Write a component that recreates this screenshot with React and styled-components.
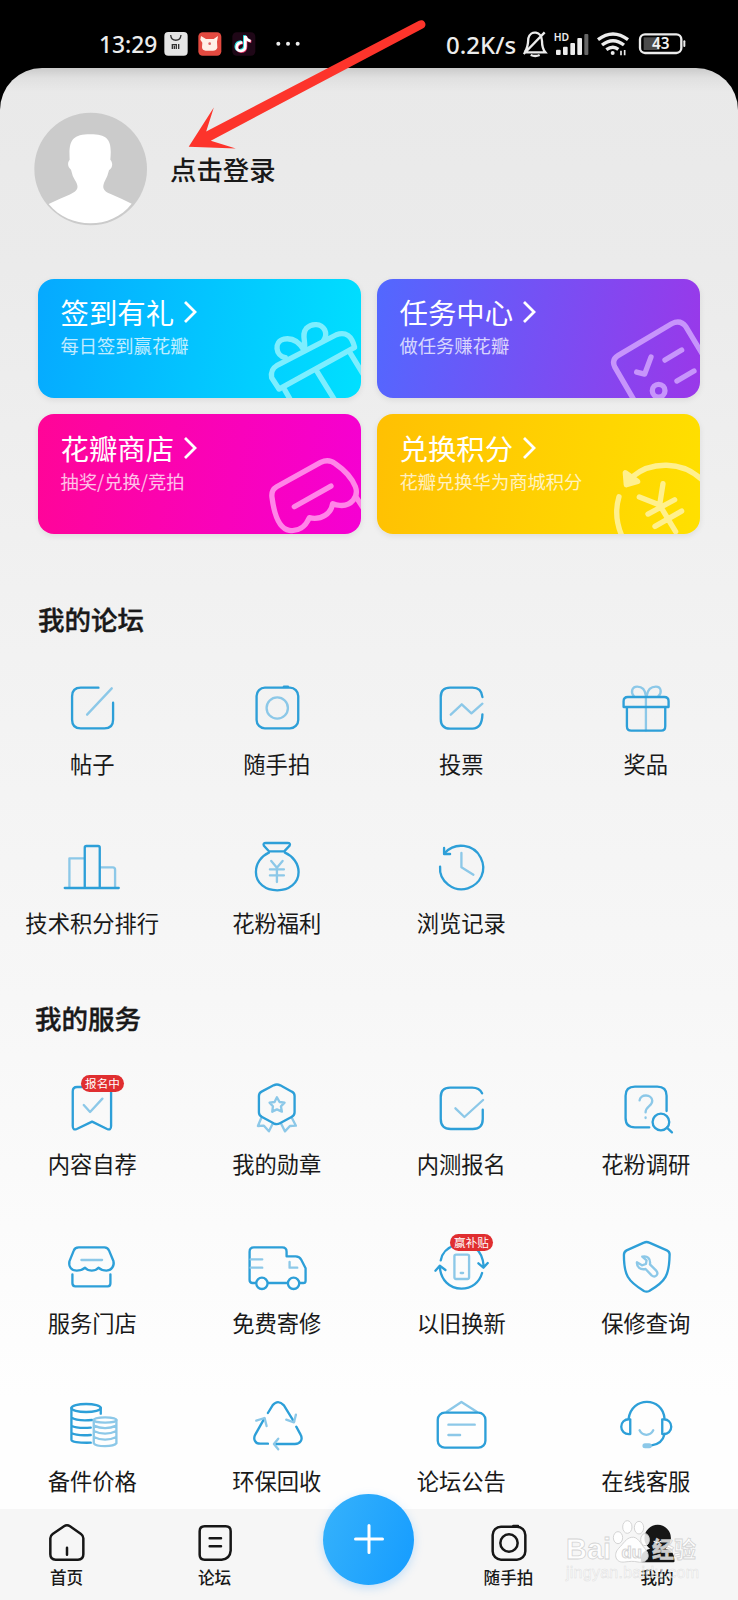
import React from "react";
import styled, { createGlobalStyle, css } from "styled-components";

const GlobalStyle = createGlobalStyle`
  * { box-sizing: border-box; }
  body {
    margin: 0;
    background: #000;
    font-family: "Noto Sans CJK SC", "Noto Sans", sans-serif;
    color: #191919;
  }
`;

const Screen = styled.div`
  position: relative;
  width: 738px;
  height: 1600px;
  overflow: hidden;
  display: flex;
  flex-direction: column;
  background: #000;
`;

/* ---------- status bar ---------- */

const StatusBar = styled.header`
  height: 68px;
  flex: none;
  display: flex;
  justify-content: space-between;
  padding: 20px 52px 0 99px;
  color: #ececec;
`;

const StatusGroup = styled.div`
  display: flex;
  align-items: center;
  height: 48px;
`;

const StatusText = styled.span`
  width: ${(p) => p.$w}px;
  font: 500 ${(p) => p.$size || 22.5}px/48px "Noto Sans", sans-serif;
  padding-top: 1px;
  white-space: nowrap;
`;

const StatusIcon = styled.svg`
  flex: none;
  height: 48px;
  width: ${(p) => p.$w}px;
  margin-left: ${(p) => p.$gap || 0}px;
  overflow: visible;
`;

/* ---------- main sheet ---------- */

const Sheet = styled.main`
  flex: 1;
  min-height: 0;
  display: flex;
  flex-direction: column;
  border-radius: 42px 42px 0 0;
  background:
    linear-gradient(rgba(0, 0, 0, 0.13), rgba(0, 0, 0, 0.04) 10px, rgba(0, 0, 0, 0) 24px),
    linear-gradient(#e9e9e9 0, #ebebeb 200px, #f1f1f1 520px, #f7f7f7 930px, #fefefe 1330px);
`;

const Profile = styled.section`
  display: flex;
  align-items: center;
  gap: 22px;
  height: 114px;
  margin: 44px 0 0 34px;
`;

const LoginText = styled.span`
  font-size: 26.4px;
  font-weight: 500;
  line-height: 40px;
`;

const CardGrid = styled.section`
  display: grid;
  grid-template-columns: 323px 323px;
  grid-auto-rows: 119.5px;
  gap: 16px;
  margin: 52.5px 0 0 38px;
`;

const Card = styled.article`
  position: relative;
  overflow: hidden;
  border-radius: 16px;
  padding: 13.5px 0 0 22.5px;
  color: #fff;
  background: linear-gradient(100deg, ${(p) => p.$from}, ${(p) => p.$to});
  box-shadow: 0 2px 6px rgba(0, 0, 0, 0.08);
`;

const CardTitle = styled.div`
  display: flex;
  align-items: center;
  gap: 9px;
  height: 40px;
  font-size: 28.4px;
  line-height: 40px;
`;

const CardSub = styled.div`
  font-size: 18.3px;
  line-height: 26px;
  opacity: 0.75;
`;

const CardArt = styled.svg`
  position: absolute;
  right: 0;
  top: 0;
  width: 94.3px;
  height: 119.5px;
  fill: none;
  stroke: ${(p) => p.$ink};
  stroke-width: 16;
  stroke-linecap: round;
  stroke-linejoin: round;
`;

const SectionTitle = styled.h2`
  margin: ${(p) => p.$top}px 0 0 ${(p) => p.$left}px;
  height: 40px;
  font-size: 26.5px;
  font-weight: 500;
  line-height: 40px;
  -webkit-text-stroke: 0.4px #191919;
`;

const TileGrid = styled.section`
  display: grid;
  grid-template-columns: repeat(4, 1fr);
  grid-auto-rows: 158.6px;
  margin-top: 37.5px;
`;

const Tile = styled.div`
  position: relative;
  display: flex;
  flex-direction: column;
  align-items: center;
`;

const TileIcon = styled.svg`
  width: 80px;
  height: 64px;
  fill: none;
  stroke: #2d9fd8;
  stroke-width: 7;
  stroke-linecap: round;
  stroke-linejoin: round;
  overflow: visible;
  .soft { stroke: #8cc8e8; }
`;

const TileLabel = styled.span`
  margin-top: 7.2px;
  font-size: 22.3px;
  line-height: 32px;
  white-space: nowrap;
`;

const Badge = styled.span`
  position: absolute;
  left: 81px;
  top: -0.5px;
  width: 43px;
  height: 17px;
  border-radius: 9px;
  background: #e02e30;
  color: #fff;
  font-size: 11.6px;
  line-height: 16.5px;
  text-align: center;
`;

/* ---------- bottom navigation ---------- */

const NavBar = styled.nav`
  position: absolute;
  left: 0;
  bottom: 0;
  width: 738px;
  height: 91px;
  display: grid;
  grid-template-columns: 133px 163px 145px 135px 162px;
  background: #f6f6f6;
`;

const NavItem = styled.div`
  display: flex;
  flex-direction: column;
  align-items: center;
  padding-top: 11px;
`;

const NavIcon = styled.svg`
  width: 44px;
  height: 46px;
  fill: none;
  stroke: #161616;
  stroke-width: 7.5;
  stroke-linecap: round;
  stroke-linejoin: round;
`;

const NavLabel = styled.span`
  margin-top: -1.5px;
  font-size: 16.6px;
  font-weight: 500;
  line-height: 24px;
`;

const AddButton = styled.button`
  justify-self: center;
  margin-top: -15.5px;
  width: 91px;
  height: 91px;
  padding: 0;
  border: 0;
  border-radius: 50%;
  background: linear-gradient(110deg, #36b2fb, #159cff);
  box-shadow: 0 3px 10px rgba(40, 150, 255, 0.25);
  display: flex;
  align-items: center;
  justify-content: center;
`;

/* ---------- overlays ---------- */

const Arrow = styled.svg`
  position: absolute;
  left: 180px;
  top: 10px;
  width: 260px;
  height: 150px;
  fill: #fd342b;
`;

const Watermark = styled.div`
  position: absolute;
  left: 566px;
  top: 1518px;
  width: 136px;
  height: 68px;
  display: flex;
  flex-direction: column;
  pointer-events: none;
`;

const markInk = css`
  color: rgba(255, 255, 255, 0.8);
  -webkit-text-stroke: 0.8px rgba(205, 205, 205, 0.85);
  font-family: "Liberation Sans", "Noto Sans CJK SC", sans-serif;
`;

const MarkTop = styled.div`
  ${markInk}
  display: flex;
  align-items: flex-end;
  height: 46px;
  font-weight: 700;
`;

const MarkWord = styled.span`
  font-size: ${(p) => p.$size}px;
  width: ${(p) => p.$w}px;
  white-space: nowrap;
  line-height: ${(p) => p.$lh}px;
`;

const MarkPaw = styled.svg`
  width: 40px;
  height: 46px;
  fill: rgba(255, 255, 255, 0.85);
  stroke: #d4d4d4;
  stroke-width: 3;
`;

const MarkUrl = styled.div`
  ${markInk}
  color: rgba(255, 255, 255, 0.6);
  -webkit-text-stroke: 0.5px rgba(212, 212, 212, 0.7);
  font-size: 16px;
  line-height: 18px;
  letter-spacing: 0.25px;
  white-space: nowrap;
`;

/* ---------- data ---------- */

const cards = [
  {
    title: "签到有礼", sub: "每日签到赢花瓣", from: "#06a9ff", to: "#00e0ff", ink: "#7deeff",
    box: "740 56 283 358",
    art: (
      <>
        <path d="M754 352q-4-25 15-36L948 223q42-15 55 38L776 386Z" />
        <path d="M795 292c-30-5-35-50-4-56 28-5 48 12 61 34 6-25-10-48 6-66 16-17 45-15 55 4 6 12 5 20-3 32" />
        <path d="M794 390l22 38M888 330l62 100M990 278l50 82" />
      </>
    ),
  },
  {
    title: "任务中心", sub: "做任务赚花瓣", from: "#5268ff", to: "#9a38e9", ink: "#c795fb",
    box: "737 56 283 358",
    art: (
      <>
        <path d="M824 424l-60-103q-12-23 10-36l160-95q26-14 43 9l60 100" />
        <path d="M829 335l24 6 19-51M914 299l50-30M950 362l51-30" />
        <circle cx="895" cy="391" r="19" />
      </>
    ),
  },
  {
    title: "花瓣商店", sub: "抽奖/兑换/竞拍", from: "#ff0597", to: "#f500d3", ink: "#ff85e8",
    box: "740 462 283 358",
    art: (
      <>
        <path d="M755 712q-3-22 14-32l132-73q24-12 44 4 44 30 60 68c12 32-14 60-46 57q-12 0-22-5c-4 28-32 50-70 42-12 28-34 42-60 38-34-6-46-52-52-99Z" />
        <path d="M822 740l110-62M1008 712l22 34" />
      </>
    ),
  },
  {
    title: "兑换积分", sub: "花瓣兑换华为商城积分", from: "#ffc003", to: "#ffe000", ink: "#fff08e",
    box: "737 462 283 358",
    art: (
      <>
        <path d="M816 650c55-46 150-50 212 12M776 710q-17 57 8 116" />
        <path d="M795 638l3 36 34-10Z" fill="#fff08e" />
        <path d="M908 671l-10 64M837 711l61 24M863 762l80-43M884 799l80-46M898 735l48 80" />
      </>
    ),
  },
];

const forumTiles = [
  {
    label: "帖子", box: "156.75 258 240 192",
    icon: (
      <>
        <path d="M296 293h-53q-26 0-26 26v70q0 26 26 26h71q26 0 26-26v-51" />
        <path className="soft" d="M336 295l-74 79" />
      </>
    ),
  },
  {
    label: "随手拍", box: "710.25 258 240 192",
    icon: (
      <>
        <rect x="769" y="293" width="125" height="122" rx="25" />
        <path d="M851 290h12" />
        <circle className="soft" cx="831" cy="354" r="32" />
      </>
    ),
  },
  {
    label: "投票", box: "153.75 48 240 192",
    icon: (
      <>
        <path d="M338 111c-2-20-12-28-30-28h-67q-28 0-28 28v66q0 29 28 29h67q29 0 30-43" />
        <path className="soft" d="M243 164l33-31 29 27 33-29" />
      </>
    ),
  },
  {
    label: "奖品", box: "707.25 48 240 192",
    icon: (
      <>
        <path className="soft" d="M827 109v102M827 108c-2-18-12-28-26-28-17 0-20 18-10 29M829 108c3-18 13-28 28-28 16 0 19 18 7 29" />
        <path d="M760 141v-17q0-13 13-13h109q13 0 13 13v17ZM770 143v56q0 13 13 13h90q12 0 12-13v-56" />
      </>
    ),
  },
  {
    label: "技术积分排行", box: "156.75 734 240 192",
    icon: (
      <>
        <path className="soft" d="M209 889v-85h43M303 831h36q7 0 7 7v51" />
        <path d="M255 892V772q0-5 5-5h35q5 0 5 5v120M195 893h162" />
      </>
    ),
  },
  {
    label: "花粉福利", box: "710.25 734 240 192",
    icon: (
      <>
        <path d="M806 783l-15-17q-4-8 6-8h65q10 0 6 8l-16 17ZM806 787c-23 10-39 33-39 58 0 34 29 55 64 55s64-21 64-55c0-25-17-48-41-58" />
        <path className="soft" d="M813 812l17 20 17-20M830 832v43M809 837h42M809 855h42" />
      </>
    ),
  },
  {
    label: "浏览记录", box: "153.75 524 240 192",
    icon: (
      <>
        <path d="M225 578c31-34 87-27 108 14 19 38 0 79-39 92-42 13-87-21-83-65" />
        <path d="M223 563v18h18" />
        <path className="soft" d="M275 578v43l36 22" />
      </>
    ),
  },
];

const serviceTiles = [
  {
    label: "内容自荐", badge: "报名中", box: "156.75 258 240 192",
    icon: (
      <>
        <path d="M219 408V304q0-13 13-13h90q12 0 12 13v104q0 14-12 9l-45-22-46 22q-12 5-12-9Z" />
        <path className="soft" d="M252 345l19 21 37-40" />
      </>
    ),
  },
  {
    label: "我的勋章", box: "710.25 258 240 192",
    icon: (
      <>
        <path className="soft" d="M783 384l-10 24 18-1 15 17 12-24M875 384l12 23-18 1-15 16-12-24M830 322l8 14 15 2-11 11 3 16-15-7-14 7 2-16-10-11 15-2Z" />
        <path d="M820 286q10-5 20 0l35 19q8 4 8 13v49q0 9-8 13l-36 20q-9 5-19 0l-36-20q-8-4-8-13v-49q0-9 8-13Z" />
      </>
    ),
  },
  {
    label: "内测报名", box: "153.75 48 240 192",
    icon: (
      <>
        <path d="M337 100q-8-17-30-17h-66q-28 0-28 28v66q0 30 30 30h66q30 0 30-30v-28" />
        <path className="soft" d="M257 145l27 26 56-51" />
      </>
    ),
  },
  {
    label: "花粉调研", box: "707.25 48 240 192",
    icon: (
      <>
        <path d="M837 202h-43q-28 0-28-28v-67q0-27 28-27h67q28 0 28 27v46" />
        <circle cx="872" cy="186" r="25" />
        <path d="M890 203l15 14" />
        <path className="soft" d="M808 121c2-20 37-19 38 1 1 17-20 16-20 35M826 172v2" />
      </>
    ),
  },
  {
    label: "服务门店", box: "156.75 734 240 192",
    icon: (
      <>
        <path d="M237 771h77q10 0 14 10l13 31c4 15-7 29-21 29q-14 0-24-9-8 9-20 9t-20-9q-10 9-25 9c-17 0-25-13-22-28l13-32q3-10 15-10Z" />
        <path d="M218 852v27q0 9 9 9h97q8 0 8-9v-27" />
        <path className="soft" d="M245 809h62" />
      </>
    ),
  },
  {
    label: "免费寄修", box: "710.25 734 240 192",
    icon: (
      <>
        <path d="M765 878h-8q-9 0-9-9v-85q0-13 13-13h85q13 0 13 13v14h27q12 0 17 10l13 26v37q0 7-7 7h-10M804 878h57" />
        <circle cx="785" cy="879" r="17" />
        <circle cx="880" cy="879" r="17" />
        <path className="soft" d="M751 807h35M751 832h35M868 815v17h23" />
      </>
    ),
  },
  {
    label: "以旧换新", badge: "赢补贴", box: "153.75 524 240 192",
    icon: (
      <>
        <path d="M213 600c4-23 20-38 43-46M318 565q21 15 24 54M326 609l15 13 13-14M337 638c-8 28-31 47-62 47-36 0-62-26-65-66M197 631l13-15 17 13" />
        <rect className="soft" x="254" y="583" width="44" height="73" rx="5" />
        <path className="soft" d="M273 638h7" />
      </>
    ),
  },
  {
    label: "保修查询", box: "707.25 524 240 192",
    icon: (
      <>
        <path d="M821 547q8-4 16 0l53 23q9 4 8 14c-1 60-11 79-61 108q-8 4-16 0c-49-30-60-48-60-108q0-10 8-14Z" />
        <path className="soft" d="M816 589l13 11-2 11-12 4-15-9c-1 15 10 23 26 20l18 19c11 9 23-3 14-14l-19-19c3-17-8-27-23-23Z" />
      </>
    ),
  },
  {
    label: "备件价格", box: "156.75 70 240 192",
    icon: (
      <>
        <ellipse cx="259" cy="115" rx="44" ry="12" />
        <path d="M215 115v95c0 6 20 10 58 9M303 115v17M215 143q16 12 62 8M215 168q16 9 58 6M215 190q16 9 58 6" />
        <g className="soft">
          <ellipse cx="316" cy="151" rx="34" ry="8" />
          <path d="M282 151v70c8 11 59 11 68 0v-70M282 168q34 15 68 0M282 184q34 16 68 0M282 202q34 16 68 0" />
        </g>
      </>
    ),
  },
  {
    label: "环保回收", box: "710.25 70 240 192",
    icon: (
      <>
        <path d="M803 130l14-23q16-19 34 0l30 49M888 171l13 24c8 14-1 28-17 28h-61M803 222h-23c-16 0-22-14-15-27l27-48" />
        <path className="soft" d="M768 153l25-8 6 24M858 150l23 8 6-23M834 207l-13 16 13 16" />
      </>
    ),
  },
  {
    label: "论坛公告", box: "153.75 70 240 192",
    icon: (
      <>
        <path className="soft" d="M231 126l44-29 46 29M236 165h79M236 196h35" />
        <rect x="204" y="129" width="143" height="105" rx="21" />
      </>
    ),
  },
  {
    label: "在线客服", box: "707.25 70 240 192",
    icon: (
      <>
        <path d="M775 148c8-69 103-68 108 0M780 149v44c-36 4-36-48 0-44ZM876 149v44c36 4 36-48 0-44ZM883 193q-7 30-39 34" />
        <path className="soft" d="M808 182c9 18 32 18 41 0" />
        <path className="soft" strokeWidth="15" d="M824 228h13" />
      </>
    ),
  },
];

const TileSection = ({ tiles }) => (
  <TileGrid>
    {tiles.map((t) => (
      <Tile key={t.label}>
        <TileIcon viewBox={t.box}>{t.icon}</TileIcon>
        {t.badge && <Badge>{t.badge}</Badge>}
        <TileLabel>{t.label}</TileLabel>
      </Tile>
    ))}
  </TileGrid>
);

const Avatar = () => (
  <svg width="114" height="114" viewBox="102 157 342 342">
    <circle cx="272" cy="328" r="169" fill="#cbcbcb" />
    <path
      fill="#fff"
      d="M146 433q35-17 62-28c27-11 30-23 17-43q-8-13-12-32c-12-10-10-23-4-30-3-55 5-76 62-76s65 21 60 76c8 9 8 24-4 32q-4 18-12 31c-10 20-6 31 17 40q35 15 63 29c-62 79-186 78-249 1Z"
    />
  </svg>
);

export default function App() {
  return (
    <>
      <GlobalStyle />
      <Screen>
        <StatusBar>
          <StatusGroup>
            <StatusText $w={64.5} $size={22.8}>13:29</StatusText>
            <StatusIcon $w={24} viewBox="251 60 72 144">
              <rect x="252" y="96" width="70" height="71" rx="12" fill="#e5e5e5" />
              <path d="M271 105c2 21 29 21 31 0" fill="none" stroke="#333" strokeWidth="4" />
              <path d="M276 147v-13h12v13M282 137v10M295 132v15" fill="none" stroke="#333" strokeWidth="4" />
            </StatusIcon>
            <StatusIcon $w={24} $gap={10.3} viewBox="354 60 72 144">
              <rect x="355" y="97" width="69" height="70" rx="13" fill="#e34a40" />
              <path d="M363 108l15 9h23l13-9-3 17 1 18q-3 9-13 9h-22q-10 0-11-10l1-14-6-9Z" fill="#fff1e8" />
              <circle cx="389" cy="131" r="4" fill="#d66" />
            </StatusIcon>
            <StatusIcon $w={24} $gap={10.3} viewBox="457 60 72 144">
              <rect x="458" y="97" width="69" height="70" rx="13" fill="#1f0717" />
              <g fill="none" strokeWidth="8">
                <path d="M488 127c-21 1-22 26-5 26q14-1 14-15v-30q3 13 16 15" stroke="#25d8dc" transform="translate(-3 -2)" />
                <path d="M488 127c-21 1-22 26-5 26q14-1 14-15v-30q3 13 16 15" stroke="#e8366a" transform="translate(2 2)" />
                <path d="M488 127c-21 1-22 26-5 26q14-1 14-15v-30q3 13 16 15" stroke="#fff" />
              </g>
            </StatusIcon>
            <StatusIcon $w={24} $gap={20} viewBox="587 60 72 144" fill="#ececec">
              <circle cx="594" cy="131" r="6" />
              <circle cx="623" cy="131" r="6" />
              <circle cx="652" cy="131" r="6" />
            </StatusIcon>
          </StatusGroup>
          <StatusGroup>
            <StatusText $w={77} $size={24}>0.2K/s</StatusText>
            <StatusIcon $w={24} viewBox="308 60 72 144" fill="none" stroke="#ececec" strokeWidth="7">
              <path d="M316 157h59q-10-12-10-34c0-29-35-35-41-8q-1 29-11 42M310 162l63-65M331 165q14 6 27 0" />
            </StatusIcon>
            <StatusIcon $w={35} $gap={7} viewBox="402 60 105 144" fill="#ececec">
              <text x="401" y="122" fontFamily="Noto Sans" fontWeight="600" fontSize="31">HD</text>
              <rect x="408" y="149" width="14" height="16" rx="3" />
              <rect x="429" y="140" width="14" height="25" rx="3" />
              <rect x="451" y="129" width="14" height="36" rx="3" />
              <rect x="472" y="114" width="14" height="51" rx="3" />
              <rect x="493" y="102" width="12" height="63" rx="3" fill="#666" />
            </StatusIcon>
            <StatusIcon $w={32} $gap={8} viewBox="532 60 96 144" fill="none" stroke="#ececec" strokeWidth="10">
              <path d="M535 119q45-34 90 0M547 135q33-26 66 0M560 149q20-14 36-1" />
              <circle cx="579" cy="159" r="6" fill="#ececec" stroke="none" />
              <path d="M604 152v14M615 150v16" strokeWidth="5" />
            </StatusIcon>
            <StatusIcon $w={47} $gap={10} viewBox="657 60 141 144">
              <rect x="660" y="103" width="124" height="56" rx="15" fill="none" stroke="#ececec" strokeWidth="7" />
              <rect x="671" y="112" width="47" height="38" fill="#4b4b4b" />
              <path d="M793 124v14" stroke="#ececec" strokeWidth="6" strokeLinecap="round" />
              <text x="722" y="148" textAnchor="middle" fill="#f2f2f2" fontFamily="Noto Sans" fontWeight="600" fontSize="46">43</text>
            </StatusIcon>
          </StatusGroup>
        </StatusBar>

        <Sheet>
          <Profile>
            <Avatar />
            <LoginText>点击登录</LoginText>
          </Profile>

          <CardGrid>
            {cards.map((c) => (
              <Card key={c.title} $from={c.from} $to={c.to}>
                <CardArt viewBox={c.box} $ink={c.ink}>{c.art}</CardArt>
                <CardTitle>
                  {c.title}
                  <svg width="14" height="24" viewBox="0 0 14 24" fill="none" stroke="#fff" strokeWidth="2.8">
                    <path d="M2 2l10 10L2 22" />
                  </svg>
                </CardTitle>
                <CardSub>{c.sub}</CardSub>
              </Card>
            ))}
          </CardGrid>

          <SectionTitle $top={65} $left={38}>我的论坛</SectionTitle>
          <TileSection tiles={forumTiles} />
          <SectionTitle $top={5.3} $left={35}>我的服务</SectionTitle>
          <TileSection tiles={serviceTiles} />
        </Sheet>

        <NavBar>
          <NavItem>
            <NavIcon viewBox="134 450 132 138">
              <path d="M150 505q0-8 7-13l34-23q9-6 18 0l33 23q7 5 7 13v48q0 16-16 16h-67q-16 0-16-16ZM200 533v21" />
            </NavIcon>
            <NavLabel>首页</NavLabel>
          </NavItem>
          <NavItem>
            <NavIcon viewBox="577 450 132 138">
              <path d="M612 469h63q15 0 15 15v58q-2 25-27 27h-51q-15 0-15-15v-70q0-15 15-15ZM627 505h34M627 529h34" />
            </NavIcon>
            <NavLabel>论坛</NavLabel>
          </NavItem>
          <AddButton aria-label="发布">
            <svg width="30" height="30" viewBox="0 0 30 30" stroke="#fff" strokeWidth="3" strokeLinecap="round">
              <path d="M15 1.5v27M1.5 15h27" />
            </svg>
          </AddButton>
          <NavItem>
            <NavIcon viewBox="352 450 132 138">
              <rect x="369" y="470" width="98" height="99" rx="25" />
              <path d="M431 468h14" />
              <circle cx="418" cy="519" r="26" />
            </NavIcon>
            <NavLabel>随手拍</NavLabel>
          </NavItem>
          <NavItem>
            <NavIcon viewBox="798 450 132 138">
              <circle cx="866" cy="504" r="36" fill="#161616" />
              <path d="M819 573q0-29 27-34h40q27 5 27 34Z" fill="#161616" />
              <path d="M855 514q11 8 21 0" stroke="#f6f6f6" strokeWidth="4" />
            </NavIcon>
            <NavLabel>我的</NavLabel>
          </NavItem>
        </NavBar>

        <Watermark aria-hidden="true">
          <MarkTop>
            <MarkWord $size={29} $w={46} $lh={29}>Bai</MarkWord>
            <MarkPaw viewBox="722 445 120 138">
              <ellipse cx="740" cy="504" rx="14" ry="18" />
              <ellipse cx="768" cy="472" rx="14" ry="19" />
              <ellipse cx="803" cy="474" rx="14" ry="19" />
              <ellipse cx="821" cy="510" rx="13" ry="18" />
              <path d="M780 503c19-4 28 19 41 34 22 26 2 45-21 40-14-3-25-2-40 0-26 4-36-22-18-41 15-15 22-30 38-33Z" />
              <text x="781" y="565" textAnchor="middle" fontFamily="Liberation Sans" fontWeight="700" fontSize="50">du</text>
            </MarkPaw>
            <MarkWord $size={22} $w={48} $lh={28}>经验</MarkWord>
          </MarkTop>
          <MarkUrl>jingyan.baidu.com</MarkUrl>
        </Watermark>

        <Arrow viewBox="180 10 260 150">
          <path d="M188.7 146.8L213.8 107.5 206.2 131.5 419 20.7A4.3 4.3 0 0 1 423.2 28.3L210.8 140.7 235.8 148.6Z" />
        </Arrow>
      </Screen>
    </>
  );
}
